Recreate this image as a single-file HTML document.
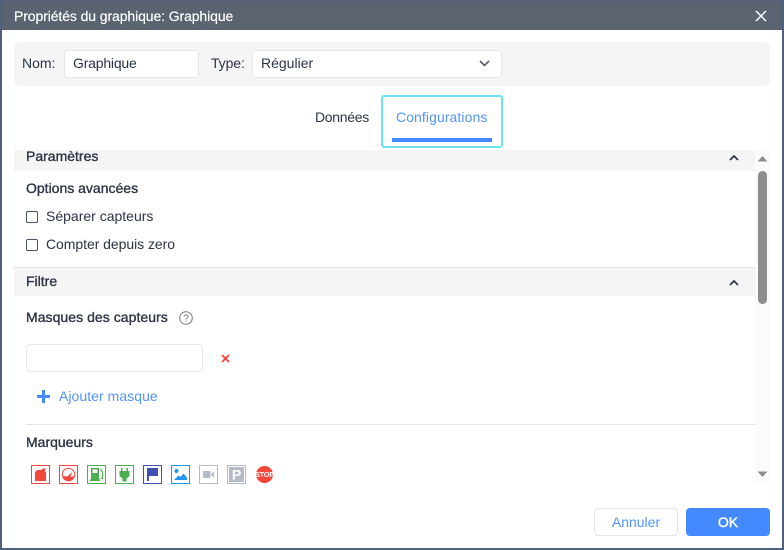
<!DOCTYPE html>
<html lang="fr"><head><meta charset="utf-8"><title>Propriétés du graphique</title>
<style>
*{box-sizing:border-box}
html,body{margin:0;padding:0;width:784px;height:550px;overflow:hidden;background:#fff}
body{position:relative;font-family:"Liberation Sans",sans-serif;font-size:14px;color:#2b3445}
.a{position:absolute}
.t{position:absolute;white-space:nowrap;line-height:16px;letter-spacing:0}
.b{font-weight:400;-webkit-text-stroke:.35px #2b3445}
.i{position:absolute;background:#fff;border:1px solid #e6e6e6;border-radius:4px}
.c{position:absolute;left:26px;width:12px;height:12px;border:1px solid #4a5160;border-radius:2px;background:#fff}
.blue{color:#5294ff}
svg{position:absolute;overflow:visible}
</style></head><body>
<div class="a" style="left:0;top:0;width:784px;height:550px;border:2px solid #4f6080;border-top-width:1px"></div>
<div class="a" style="left:2px;top:1px;width:780px;height:29px;background:#5c6370"></div>
<div class="t" style="left:14px;top:8px;color:#fff;letter-spacing:-.1px;-webkit-text-stroke:.15px #fff">Propriétés du graphique: Graphique</div>
<svg style="left:755px;top:10px" width="12" height="12"><path d="M1 1L11 11M11 1L1 11" stroke="#fff" stroke-width="1.5" fill="none"/></svg>

<div class="a" style="left:14px;top:42px;width:756px;height:44px;background:#f5f5f5;border-radius:4px"></div>
<div class="t" style="left:22px;top:55px">Nom:</div>
<div class="i" style="left:64px;top:50px;width:135px;height:28px"></div>
<div class="t" style="left:73px;top:55px;letter-spacing:-.2px">Graphique</div>
<div class="t" style="left:211px;top:55px;letter-spacing:-.1px">Type:</div>
<div class="i" style="left:252px;top:50px;width:250px;height:28px"></div>
<div class="t" style="left:261px;top:55px">Régulier</div>
<svg style="left:479px;top:60px" width="11" height="8"><path d="M1 1L5.500 5.500L10 1" stroke="#555c6a" stroke-width="1.600" fill="none"/></svg>

<div class="t" style="left:315px;top:109px;letter-spacing:-.3px">Données</div>
<div class="a" style="left:381px;top:95px;width:122px;height:53px;border:2px solid #6ce3f2;border-radius:3px"></div>
<div class="t blue" style="left:396px;top:109px;letter-spacing:.08px">Configurations</div>
<div class="a" style="left:392px;top:138px;width:100px;height:4px;background:#4489ff"></div>

<div class="a" style="left:14px;top:150px;width:741px;height:21px;background:#f5f5f5"></div>
<div class="t b" style="left:26px;top:148px">Paramètres</div>
<svg style="left:729px;top:154px" width="10" height="7"><path d="M1 6L5 2L9 6" stroke="#2b3445" stroke-width="1.700" fill="none"/></svg>

<div class="a" style="left:755px;top:150px;width:15px;height:334px;background:#fbfbfb"></div>
<svg style="left:757px;top:155px" width="11" height="7"><path d="M5.500 1L10.500 6.500H.5Z" fill="#8c8c8c"/></svg>
<div class="a" style="left:758px;top:171px;width:9px;height:133px;background:#8c8c8c;border-radius:5px"></div>
<svg style="left:757px;top:471px" width="11" height="7"><path d="M.5 .5H10.500L5.500 6Z" fill="#8c8c8c"/></svg>

<div class="t b" style="left:26px;top:180px">Options avancées</div>
<div class="c" style="top:211px"></div>
<div class="t" style="left:46px;top:208px">Séparer capteurs</div>
<div class="c" style="top:239px"></div>
<div class="t" style="left:46px;top:236px;letter-spacing:-.05px">Compter depuis zero</div>

<div class="a" style="left:14px;top:267px;width:741px;height:29px;background:#f5f5f5;border-top:1px solid #e3e3e3"></div>
<div class="t b" style="left:26px;top:273px">Filtre</div>
<svg style="left:729px;top:279px" width="10" height="7"><path d="M1 6L5 2L9 6" stroke="#2b3445" stroke-width="1.700" fill="none"/></svg>

<div class="t b" style="left:26px;top:309px;letter-spacing:.05px">Masques des capteurs</div>
<svg style="left:179px;top:311px" width="14" height="14"><circle cx="7" cy="7" r="6.300" stroke="#777" fill="none"/><text x="7" y="10.500" font-size="10" text-anchor="middle" fill="#666" font-family="Liberation Sans">?</text></svg>
<div class="i" style="left:26px;top:344px;width:177px;height:28px"></div>
<svg style="left:221px;top:354px" width="9" height="9"><path d="M1 1L8 8M8 1L1 8" stroke="#f4473b" stroke-width="1.800" fill="none"/></svg>
<svg style="left:37px;top:390px" width="13" height="13"><path d="M6.500 0V13M0 6.500H13" stroke="#4489ff" stroke-width="3" fill="none"/></svg>
<div class="t blue" style="left:59px;top:388px;letter-spacing:.05px">Ajouter masque</div>
<div class="a" style="left:26px;top:424px;width:729px;height:1px;background:#e3e3e3"></div>
<div class="t b" style="left:26px;top:434px">Marqueurs</div>

<!-- marker icons -->
<svg style="left:31px;top:465px" width="19" height="19"><rect x=".5" y=".5" width="18" height="18" fill="#fff" stroke="#f4473b"/><path d="M4 7L6.500 5H10L13 3L15 5L13.500 6L15 7V16H4Z" fill="#f4473b"/></svg>
<svg style="left:59px;top:465px" width="19" height="19"><rect x=".5" y=".5" width="18" height="18" fill="#fff" stroke="#f4473b"/><circle cx="9.500" cy="9.500" r="6.200" fill="none" stroke="#f4473b" stroke-width="1"/><path d="M3.300 11L8.500 11.500L13 7L11.500 12L15.700 11A6.300 6.300 0 0 1 3.300 11Z" fill="#f4473b"/></svg>
<svg style="left:87px;top:465px" width="19" height="19"><rect x=".5" y=".5" width="18" height="18" fill="#fff" stroke="#4caf50"/><path d="M4 3H12V14.500H13V16H3V14.500H4Z" fill="#4caf50"/><rect x="5.500" y="4.500" width="5" height="3.500" fill="#fff"/><path d="M13.500 4L15.500 7V13.500H13.500" fill="none" stroke="#4caf50" stroke-width="1.200"/></svg>
<svg style="left:115px;top:465px" width="19" height="19"><rect x=".5" y=".5" width="18" height="18" fill="#fff" stroke="#4caf50"/><path d="M6 3H7.500V6H11.500V3H13V6H14.500V11L11.500 13.500V16.500H7.500V13.500L4.500 11V6H6Z" fill="#4caf50"/></svg>
<svg style="left:143px;top:465px" width="19" height="19"><rect x=".5" y=".5" width="18" height="18" fill="#fff" stroke="#3f51b5"/><path d="M4 3H15V11H6V16H4Z" fill="#3f51b5"/></svg>
<svg style="left:171px;top:465px" width="19" height="19"><rect x=".5" y=".5" width="18" height="18" fill="#fff" stroke="#2196f3"/><circle cx="5.500" cy="6" r="2" fill="#2196f3"/><path d="M3 15L7.500 10.500L9.500 12L12.500 8.500L16 12.500V15Z" fill="#2196f3"/></svg>
<svg style="left:199px;top:465px" width="19" height="19"><rect x=".5" y=".5" width="18" height="18" fill="#fff" stroke="#b4bac6"/><rect x="4" y="6" width="7.500" height="7" rx="1" fill="#b4bac6"/><path d="M12 9L15 6.500V12.500L12 10Z" fill="#b4bac6"/></svg>
<svg style="left:227px;top:465px" width="19" height="19"><rect x=".5" y=".5" width="18" height="18" fill="#fff" stroke="#b4bac6"/><rect x="2" y="2" width="15" height="15" fill="#b4bac6"/><text x="9.500" y="14.500" font-size="14" font-weight="700" text-anchor="middle" fill="#fff" font-family="Liberation Sans">P</text></svg>
<svg style="left:256px;top:466px" width="17" height="17"><circle cx="8.500" cy="8.500" r="8.500" fill="#f4473b"/><text x="8.500" y="11" font-size="7" font-weight="700" text-anchor="middle" fill="#fff" font-family="Liberation Sans" letter-spacing="-.1">STOP</text></svg>

<div class="a" style="left:594px;top:508px;width:84px;height:28px;background:#fff;border:1px solid #e3e3e3;border-radius:4px"></div>
<div class="t blue" style="left:594px;width:84px;text-align:center;top:514px">Annuler</div>
<div class="a" style="left:686px;top:508px;width:84px;height:28px;background:#4489ff;border-radius:4px"></div>
<div class="t" style="left:686px;width:84px;text-align:center;top:514px;color:#fff;-webkit-text-stroke:.4px #fff">OK</div>
</body></html>
